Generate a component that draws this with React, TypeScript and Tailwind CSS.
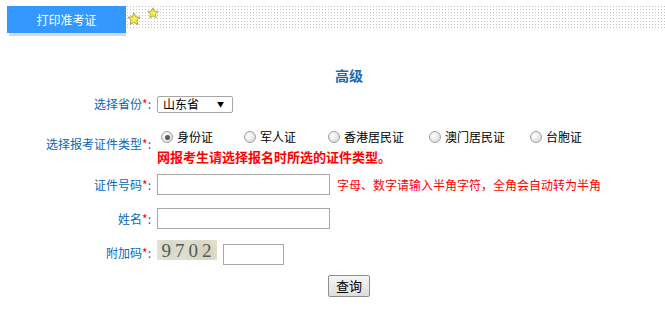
import type React from "react";

const font = { fontFamily: '"Noto Sans CJK SC", "Liberation Sans", sans-serif' };

function Star({ size, className }: { size: number; className: string }) {
  return (
    <svg width={size} height={size} viewBox="0 0 24 24" className={className}>
      <polygon
        points="12,1.5 15.1,8.3 22.5,9.1 17,14.1 18.5,21.5 12,17.8 5.5,21.5 7,14.1 1.5,9.1 8.9,8.3"
        fill="#f7ec4a"
        stroke="#a39a4c"
        strokeWidth="1.6"
        strokeLinejoin="round"
      />
    </svg>
  );
}

function Label({ children }: { children: React.ReactNode }) {
  return (
    <div className="w-[151px] shrink-0 text-right text-[12px] leading-4 text-[#0b67b5]">
      {children}
      <span className="text-[#ff0000]">*</span>:
    </div>
  );
}

function Radio({ label, checked = false, width }: { label: string; checked?: boolean; width: string }) {
  return (
    <div className={`flex items-center gap-[4px] ${width}`}>
      <span className="flex h-[12px] w-[12px] items-center justify-center rounded-full border border-[#a0a0a0] bg-[radial-gradient(circle_at_35%_35%,#ffffff,#d4d4d4)]">
        {checked && <span className="h-[5px] w-[5px] rounded-full bg-[#5a5a5a]" />}
      </span>
      <span className="text-[12px] leading-4 text-black">{label}</span>
    </div>
  );
}

export default function App() {
  return (
    <div className="min-h-[326px] w-[665px] bg-white" style={font}>
      <div className="relative flex pt-[6px] pl-[7px]">
        <div className="flex w-[119px] flex-col">
          <div className="flex h-[27px] items-center justify-center bg-[#3399ff] text-[12px] text-white">打印准考证</div>
          <div className="ml-[2px] h-[3px] bg-[#d8d8d8]" />
        </div>
        <div className="h-[22px] flex-1 bg-[linear-gradient(to_bottom,transparent_1px,#fff_1px),linear-gradient(to_right,#c4c4c4_1px,transparent_1px)] bg-[length:3px_3px] bg-[position:1px_0]" />
        <Star size={14} className="absolute left-[127px] top-[12px]" />
        <Star size={12} className="absolute left-[147px] top-[7px]" />
      </div>

      <div className="mt-[30px] pl-[335px] text-[14px] font-bold leading-[18px] text-[#1d6ab3]">高级</div>

      <div className="mt-[10px] flex h-[20px] items-center gap-[6px]">
        <Label>选择省份</Label>
        <div className="flex h-[17px] w-[76px] items-center justify-between rounded-[2px] border border-[#a6a6a6] pr-[8px] pl-[5px]">
          <span className="text-[12px] leading-4 text-black">山东省</span>
          <span className="text-[7px] leading-none text-black">▼</span>
        </div>
      </div>

      <div className="mt-[15px] flex gap-[6px]">
        <div className="pt-[7px]">
          <Label>选择报考证件类型</Label>
        </div>
        <div className="flex flex-col gap-[4px]">
          <div className="flex h-[16px] items-center pl-[4px]">
            <Radio label="身份证" checked width="w-[83px]" />
            <Radio label="军人证" width="w-[84px]" />
            <Radio label="香港居民证" width="w-[101px]" />
            <Radio label="澳门居民证" width="w-[101px]" />
            <Radio label="台胞证" width="w-[80px]" />
          </div>
          <div className="text-[13px] font-bold leading-4 text-[#ff0000]">网报考生请选择报名时所选的证件类型。</div>
        </div>
      </div>

      <div className="mt-[9px] flex h-[21px] items-center gap-[6px]">
        <Label>证件号码</Label>
        <div className="h-[21px] w-[173px] border border-[#a9a9a9]" />
        <span className="ml-[1px] text-[12px] leading-4 text-[#ff0000]">字母、数字请输入半角字符，全角会自动转为半角</span>
      </div>

      <div className="mt-[13px] flex h-[21px] items-center gap-[6px]">
        <Label>姓名</Label>
        <div className="h-[21px] w-[173px] border border-[#a9a9a9]" />
      </div>

      <div className="mt-[11px] flex h-[25px] items-center gap-[6px]">
        <Label>附加码</Label>
        <div className="flex h-[20px] w-[60px] items-center justify-center self-start bg-[radial-gradient(circle_at_20%_40%,#d3d6cc,transparent_40%),radial-gradient(circle_at_80%_60%,#d2cfbb,transparent_45%),linear-gradient(90deg,#ebe8d8,#e0dfd0,#ece8d8)] pl-[3px] font-['Liberation_Serif',serif] text-[19px] leading-none tracking-[4px] text-[#4a5f5a]">
          9702
        </div>
        <div className="h-[21px] w-[61px] self-end border border-[#a9a9a9]" />
      </div>

      <div className="mt-[10px] pl-[328px]">
        <div className="flex h-[22px] w-[42px] items-center justify-center rounded-[2px] border border-[#8f8f8f] bg-[linear-gradient(to_bottom,#f6f6f6,#dddddd)] text-[13px] text-black">
          查询
        </div>
      </div>
    </div>
  );
}
